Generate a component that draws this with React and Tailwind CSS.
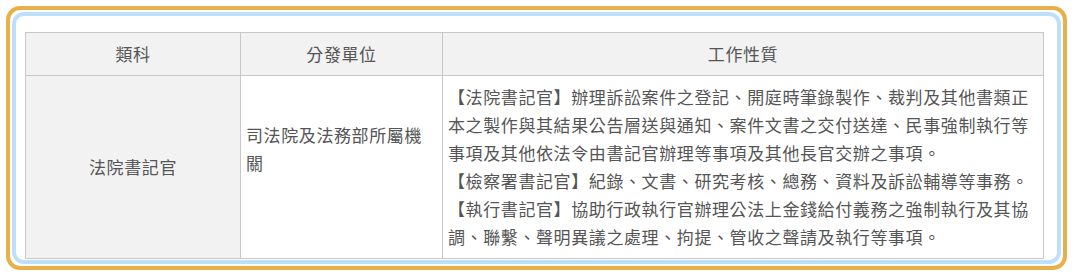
import React from "react";

const font = { fontFamily: '"Noto Sans CJK TC", "Noto Sans", sans-serif' };

export default function App() {
  return (
    <div className="bg-white w-[1075px] h-[278px] pt-[6px] pl-[6px]" style={font}>
      <div className="w-[1061px] h-[264px] border-4 border-[#e8b04a] rounded-[14px] p-[2px]">
        <div className="h-full border-4 border-[#bddff9] rounded-[12px] overflow-hidden pt-[16px] pl-[9px]">
          <table className="w-[1018px] border-collapse table-fixed text-[17px] tracking-[0.6px] text-[#555]">
            <colgroup>
              <col className="w-[215px]" />
              <col className="w-[202px]" />
              <col className="w-[601px]" />
            </colgroup>
            <thead>
              <tr className="bg-[#f2f2f2] h-[43px]">
                <th className="border border-[#c8c8c8] font-normal text-center">類科</th>
                <th className="border border-[#c8c8c8] font-normal text-center">分發單位</th>
                <th className="border border-[#c8c8c8] font-normal text-center">工作性質</th>
              </tr>
            </thead>
            <tbody>
              <tr className="leading-[28px]">
                <td className="border border-[#c8c8c8] bg-[#f2f2f2] text-center align-middle">法院書記官</td>
                <td className="border border-[#c8c8c8] align-middle px-[5px] pt-[7px] pb-[44px]">
                  司法院及法務部所屬機關
                </td>
                <td className="border border-[#c8c8c8] align-top px-[5px] py-[7px]">
                  【法院書記官】辦理訴訟案件之登記、開庭時筆錄製作、裁判及其他書類正本之製作與其結果公告層送與通知、案件文書之交付送達、民事強制執行等事項及其他依法令由書記官辦理等事項及其他長官交辦之事項。
                  <br />
                  【檢察署書記官】紀錄、文書、研究考核、總務、資料及訴訟輔導等事務。
                  <br />
                  【執行書記官】協助行政執行官辦理公法上金錢給付義務之強制執行及其協調、聯繫、聲明異議之處理、拘提、管收之聲請及執行等事項。
                </td>
              </tr>
            </tbody>
          </table>
        </div>
      </div>
    </div>
  );
}
